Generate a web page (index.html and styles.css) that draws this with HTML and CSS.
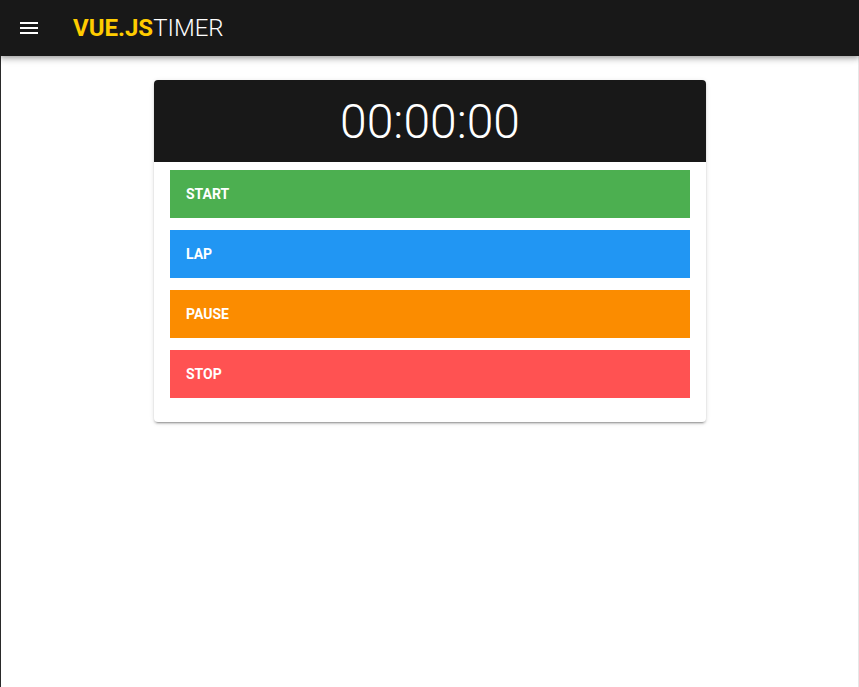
FILE: index.html
```html
<!DOCTYPE html>
<html>
<head>
<meta charset="utf-8">
<link rel="stylesheet" href="styles.css">
</head>
<body>
<header class="toolbar">
  <button class="menu-btn" aria-label="menu">
    <svg width="24" height="24" viewBox="0 0 24 24"><path fill="#fff" d="M3 6h18v2H3zM3 11h18v2H3zM3 16h18v2H3z"/></svg>
  </button>
  <div class="title"><span class="brand">VUE.JS</span><span class="sub">TIMER</span></div>
</header>
<main class="content">
  <section class="card">
    <div class="display">00:00:00</div>
    <div class="actions">
      <button class="btn green">START</button>
      <button class="btn blue">LAP</button>
      <button class="btn orange">PAUSE</button>
      <button class="btn red">STOP</button>
    </div>
  </section>
</main>
</body>
</html>
```
FILE: styles.css
```css
html, body { margin: 0; padding: 0; height: 100%; }
body {
  font-family: Roboto, "Liberation Sans", sans-serif;
  background: #fff;
  display: flex;
  flex-direction: column;
}
.toolbar {
  height: 56px;
  flex: none;
  background: #181818;
  display: flex;
  align-items: center;
  padding-left: 17px;
  box-shadow: 0 2px 4px -1px rgba(0,0,0,.2), 0 4px 5px 0 rgba(0,0,0,.14), 0 1px 10px 0 rgba(0,0,0,.12);
  position: relative;
  z-index: 2;
}
.menu-btn {
  background: none;
  border: 0;
  padding: 0;
  width: 24px;
  height: 24px;
  display: flex;
  cursor: pointer;
}
.title {
  margin-left: 32px;
  font-size: 24px;
  letter-spacing: 0;
  line-height: 1;
}
.brand { color: #ffcc00; font-weight: 700; }
.sub { color: #fff; font-weight: 300; }
.content {
  flex: 1;
  border-left: 1px solid #2a2a2a;
  border-right: 1px solid #e6e6e6;
  display: flex;
  justify-content: center;
  align-items: flex-start;
  padding-top: 24px;
}
.card {
  width: 552px;
  margin-left: 1px;
  background: #fff;
  border-radius: 4px;
  overflow: hidden;
  box-shadow: 0 3px 1px -2px rgba(0,0,0,.2), 0 2px 2px 0 rgba(0,0,0,.14), 0 1px 5px 0 rgba(0,0,0,.12);
}
.display {
  background: #181818;
  color: #fff;
  height: 82px;
  display: flex;
  align-items: center;
  justify-content: center;
  font-size: 48px;
  font-weight: 300;
}
.actions {
  padding: 8px 16px 24px;
  display: flex;
  flex-direction: column;
  gap: 12px;
}
.btn {
  height: 48px;
  border: 0;
  margin: 0;
  padding: 0 16px;
  text-align: left;
  color: #fff;
  font-family: Roboto, "Liberation Sans", sans-serif;
  font-weight: 700;
  font-size: 14px;
  cursor: pointer;
}
.green { background: #4caf50; }
.blue { background: #2196f3; }
.orange { background: #fb8c00; }
.red { background: #ff5252; }
```
